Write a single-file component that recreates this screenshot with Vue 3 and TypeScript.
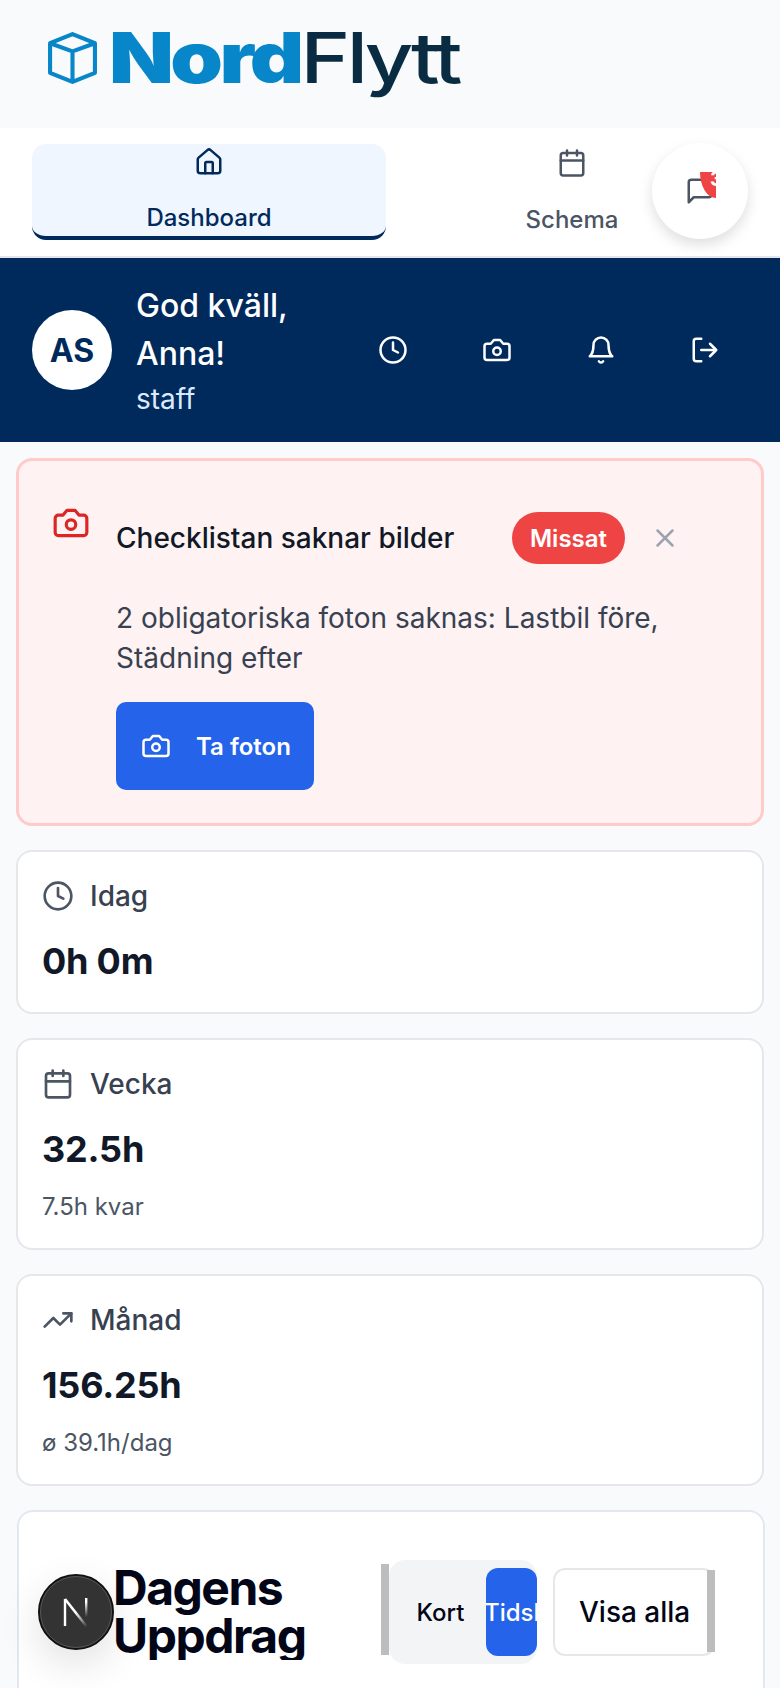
<script setup lang="ts">
const cards = [
  { label: 'Idag', value: '0h 0m', sub: '', icon: 'clock' },
  { label: 'Vecka', value: '32.5h', sub: '7.5h kvar', icon: 'calendar' },
  { label: 'Månad', value: '156.25h', sub: 'ø 39.1h/dag', icon: 'trend' },
]
</script>

<template>
  <div class="page">
    <header class="brand">
      <svg class="cube" viewBox="0 0 48 51" fill="none" stroke="currentColor" stroke-width="4" stroke-linejoin="round">
        <path d="M24 2 46 11V40L24 49 2 40V11Z" />
        <path d="M2 11 24 19 46 11M24 19V49" />
      </svg>
      <span class="word"><span class="nord">Nord</span><span class="flytt">Flytt</span></span>
    </header>

    <nav class="tabs">
      <div class="tab active">
        <svg class="ic i28" viewBox="0 0 24 24"><path d="M15 21v-8a1 1 0 0 0-1-1h-4a1 1 0 0 0-1 1v8" /><path d="M3 10a2 2 0 0 1 .709-1.528l7-5.999a2 2 0 0 1 2.582 0l7 5.999A2 2 0 0 1 21 10v9a2 2 0 0 1-2 2H5a2 2 0 0 1-2-2z" /></svg>
        <span>Dashboard</span>
      </div>
      <div class="tab">
        <svg class="ic i28" viewBox="0 0 24 24"><path d="M8 2v4M16 2v4M3 10h18" /><rect x="3" y="4" width="18" height="18" rx="2" /></svg>
        <span>Schema</span>
      </div>
      <button class="chat">
        <svg class="ic i28" viewBox="0 0 24 24"><path d="M21 15a2 2 0 0 1-2 2H7l-4 4V5a2 2 0 0 1 2-2h14a2 2 0 0 1 2 2z" /></svg>
        <span class="chat-badge">3</span>
      </button>
    </nav>

    <section class="hero">
      <div class="avatar">AS</div>
      <div class="greet">
        <div class="hello">God kväll,<br />Anna!</div>
        <div class="role">staff</div>
      </div>
      <div class="hero-icons">
        <svg class="ic i30" viewBox="0 0 24 24"><circle cx="12" cy="12" r="10" /><path d="M12 6v6l4 2" /></svg>
        <svg class="ic i30" viewBox="0 0 24 24"><path d="M14.5 4h-5L7 7H4a2 2 0 0 0-2 2v9a2 2 0 0 0 2 2h16a2 2 0 0 0 2-2V9a2 2 0 0 0-2-2h-3l-2.5-3z" /><circle cx="12" cy="13" r="3" /></svg>
        <svg class="ic i30" viewBox="0 0 24 24"><path d="M6 8a6 6 0 0 1 12 0c0 7 3 9 3 9H3s3-2 3-9" /><path d="M10.3 21a1.94 1.94 0 0 0 3.4 0" /></svg>
        <svg class="ic i30" viewBox="0 0 24 24"><path d="M9 21H5a2 2 0 0 1-2-2V5a2 2 0 0 1 2-2h4" /><path d="m16 17 5-5-5-5M21 12H9" /></svg>
      </div>
    </section>

    <main class="content">
      <section class="alert">
        <svg class="ic alert-ic" viewBox="0 0 24 24"><path d="M14.5 4h-5L7 7H4a2 2 0 0 0-2 2v9a2 2 0 0 0 2 2h16a2 2 0 0 0 2-2V9a2 2 0 0 0-2-2h-3l-2.5-3z" /><circle cx="12" cy="13" r="3" /></svg>
        <div class="alert-body">
          <div class="alert-top">
            <span class="alert-title">Checklistan saknar bilder</span>
            <span class="missed">Missat</span>
            <svg class="ic close" viewBox="0 0 24 24"><path d="M18 6 6 18M6 6l12 12" /></svg>
          </div>
          <p class="alert-text">2 obligatoriska foton saknas: Lastbil före, Städning efter</p>
          <button class="photo-btn">
            <svg class="ic i30" viewBox="0 0 24 24"><path d="M14.5 4h-5L7 7H4a2 2 0 0 0-2 2v9a2 2 0 0 0 2 2h16a2 2 0 0 0 2-2V9a2 2 0 0 0-2-2h-3l-2.5-3z" /><circle cx="12" cy="13" r="3" /></svg>
            <span>Ta foton</span>
          </button>
        </div>
      </section>

      <section v-for="c in cards" :key="c.label" class="card">
        <div class="card-head">
          <svg class="ic card-ic" viewBox="0 0 24 24">
            <template v-if="c.icon === 'clock'"><circle cx="12" cy="12" r="10" /><path d="M12 6v6l4 2" /></template>
            <template v-else-if="c.icon === 'calendar'"><path d="M8 2v4M16 2v4M3 10h18" /><rect x="3" y="4" width="18" height="18" rx="2" /></template>
            <template v-else><path d="M22 7l-8.500 8.500-5-5L2 17" /><path d="M16 7h6v6" /></template>
          </svg>
          <span>{{ c.label }}</span>
        </div>
        <div class="value">{{ c.value }}</div>
        <div v-if="c.sub" class="sub">{{ c.sub }}</div>
      </section>

      <section class="card jobs">
        <h2 class="jobs-title">Dagens Uppdrag</h2>
        <div class="jobs-actions">
          <i class="sbar left"></i>
          <div class="toggle">
            <span class="seg">Kort</span>
            <span class="seg on"><span>Tidslinje</span></span>
          </div>
          <div class="all">Visa alla<i class="sbar right"></i></div>
        </div>
      </section>
    </main>

    <div class="next">
      <svg viewBox="0 0 76 76" width="76" height="76" fill="none">
        <defs>
          <linearGradient id="nd" gradientUnits="userSpaceOnUse" x1="30" y1="26" x2="50" y2="52"><stop offset="0.45" stop-color="#fff" /><stop offset="1" stop-color="#fff" stop-opacity="0" /></linearGradient>
          <linearGradient id="ns" x1="0" y1="0" x2="0" y2="1"><stop offset="0.2" stop-color="#fff" /><stop offset="1" stop-color="#fff" stop-opacity="0" /></linearGradient>
        </defs>
        <path d="M27 52V25" stroke="#fff" stroke-width="2.400" />
        <path d="M27 25 49 53" stroke="url(#nd)" stroke-width="2.600" />
        <rect x="47" y="24" width="2.400" height="19" fill="url(#ns)" />
      </svg>
    </div>
  </div>
</template>

<style>
html, body { margin: 0; overflow: hidden; background: #f8fafc; }
</style>

<style scoped>
.page {
  position: relative;
  width: 780px;
  height: 1688px;
  overflow: hidden;
  background: #f9fafb;
  font-family: Inter, "Noto Sans", sans-serif;
  color: #111827;
}
.ic { fill: none; stroke: currentColor; stroke-width: 2; stroke-linecap: round; stroke-linejoin: round; flex: none; display: block; }
.i28 { width: 30px; height: 30px; }
.i30 { width: 30px; height: 30px; }

.brand { height: 128px; display: flex; align-items: flex-start; padding: 32px 0 0 48px; box-sizing: border-box; background: #f8fafc; gap: 12px; }
.cube { width: 49px; height: 52px; color: #0786c9; flex: none; }
.word { font-size: 70px; line-height: 51px; letter-spacing: -3px; display: flex; white-space: nowrap; height: 51px; transform: scaleX(1.205); transform-origin: left center; }
.nord { color: #0786c9; font-weight: 900; }
.flytt { color: #0a2c42; font-weight: 500; }

.tabs { position: relative; height: 130px; box-sizing: border-box; padding: 16px 32px 16px; background: #fff; border-bottom: 2px solid #e5e7eb; display: grid; grid-template-columns: 354px 1fr; gap: 0; }
.tab { display: flex; flex-direction: column; align-items: center; height: 96px; box-sizing: border-box; padding-top: 4px; color: #4b5563; font-size: 24px; font-weight: 500; gap: 27px; border-radius: 14px; }
.tab span { line-height: 30px; }
.tab.active { background: #eff6ff; color: #002a5c; border-bottom: 4px solid #002a5c; gap: 26px; padding-top: 3px; }
.tab:not(.active) { padding-left: 10px; }
.chat { position: absolute; left: 652px; top: 15px; width: 96px; height: 96px; border-radius: 50%; border: 0; background: #fff; box-shadow: 0 6px 14px rgba(0,0,0,.13); color: #4b5563; display: flex; align-items: center; justify-content: center; padding: 0; }
.chat-badge { position: absolute; left: 48px; top: 29px; width: 16px; height: 26px; overflow: hidden; background: #ef4444; border-bottom-left-radius: 16px 26px; color: #fff; font-size: 20px; font-weight: 700; line-height: 14px; text-indent: 10px; font-family: Inter, sans-serif; text-align: left; }

.hero { height: 184px; background: #002a5c; display: flex; align-items: center; padding-left: 32px; color: #fff; box-sizing: border-box; }
.avatar { width: 80px; height: 80px; border-radius: 50%; background: #fff; color: #002a5c; font-size: 32px; font-weight: 700; display: flex; align-items: center; justify-content: center; flex: none; }
.greet { margin-left: 24px; width: 242px; }
.hello { font-size: 32px; line-height: 48px; font-weight: 500; }
.role { font-size: 28px; line-height: 38px; color: #dbeafe; margin-top: 2px; }
.hero-icons { display: flex; gap: 74px; }

.content { padding: 16px; display: flex; flex-direction: column; gap: 24px; }
.alert { height: 368px; box-sizing: border-box; border: 3px solid #fecaca; border-radius: 16px; background: #fef2f2; display: flex; padding: 45px 0 0 33px; gap: 26px; }
.alert-ic { width: 38px; height: 38px; color: #dc2626; margin-top: -2px; }
.alert-body { flex: 1; min-width: 0; }
.alert-top { display: flex; align-items: center; height: 52px; margin-top: 6px; }
.alert-title { font-size: 28px; font-weight: 500; color: #111827; width: 396px; white-space: nowrap; }
.missed { width: 113px; height: 52px; border-radius: 26px; background: #ef4444; color: #fff; font-size: 24px; font-weight: 600; display: flex; align-items: center; justify-content: center; }
.close { width: 30px; height: 30px; color: #9ca3af; margin-left: 25px; }
.alert-text { margin: 34px 0 0; width: 600px; font-size: 28px; line-height: 40px; color: #374151; }
.photo-btn { margin-top: 24px; width: 198px; height: 88px; border: 0; border-radius: 10px; background: #2563eb; color: #fff; font: 600 24px Inter, sans-serif; display: flex; align-items: center; gap: 25px; padding: 0 0 0 25px; box-sizing: border-box; }

.card { box-sizing: border-box; border: 2px solid #e5e7eb; border-radius: 16px; background: #fff; padding: 28px 24px 31px; }
.card-head { display: flex; align-items: center; gap: 16px; font-size: 28px; font-weight: 500; color: #374151; height: 32px; }
.card-ic { width: 32px; height: 32px; color: #4b5563; }
.value { font-size: 36px; font-weight: 700; line-height: 40px; margin-top: 29px; color: #111827; letter-spacing: -.2px; }
.sub { font-size: 24px; line-height: 20px; margin-top: 28px; color: #4b5563; }

.jobs { flex: none; height: 300px; border-color: #e2e8f0; padding: 48px 0 0 94px; display: flex; align-items: flex-start; margin-left: 1px; margin-right: -1px; }
.jobs-title { margin: 4px 0 0; width: 268px; height: 96px; overflow: hidden; font-size: 48px; line-height: 48px; font-weight: 700; color: #020617; flex: none; letter-spacing: -1.5px; }
.jobs-actions { display: flex; align-items: center; height: 104px; position: relative; }
.sbar { display: block; background: #bdbdbd; width: 8px; }
.sbar.left { height: 91px; align-self: flex-start; margin-top: 4px; }
.toggle { width: 148px; height: 104px; border-radius: 16px; background: #f3f4f6; display: flex; align-items: center; font-size: 24px; font-weight: 500; box-sizing: border-box; }
.seg { display: flex; align-items: center; justify-content: center; height: 88px; color: #020617; width: 97px; padding-left: 6px; box-sizing: border-box; flex: none; }
.seg.on { width: 51px; padding: 0; background: #2563eb; color: #fff; border-radius: 12px; overflow: hidden; justify-content: flex-start; white-space: nowrap; }
.seg.on span { margin-left: -2px; }
.all { position: relative; width: 162px; height: 88px; margin-left: 16px; box-sizing: border-box; border: 2px solid #e5e7eb; border-radius: 12px; font-size: 28px; font-weight: 500; color: #020617; display: flex; align-items: center; padding-left: 24px; white-space: nowrap; }
.sbar.right { position: absolute; right: -2px; top: 0; height: 82px; }

.next { position: absolute; left: 38px; top: 1574px; width: 76px; height: 76px; box-sizing: border-box; border-radius: 50%; background: #333; border: 2px solid #111; outline: 1px solid #555; outline-offset: -3px; display: flex; align-items: center; justify-content: center; box-shadow: 0 14px 40px rgba(0,0,0,.12); }
.next svg { flex: none; }
</style>
